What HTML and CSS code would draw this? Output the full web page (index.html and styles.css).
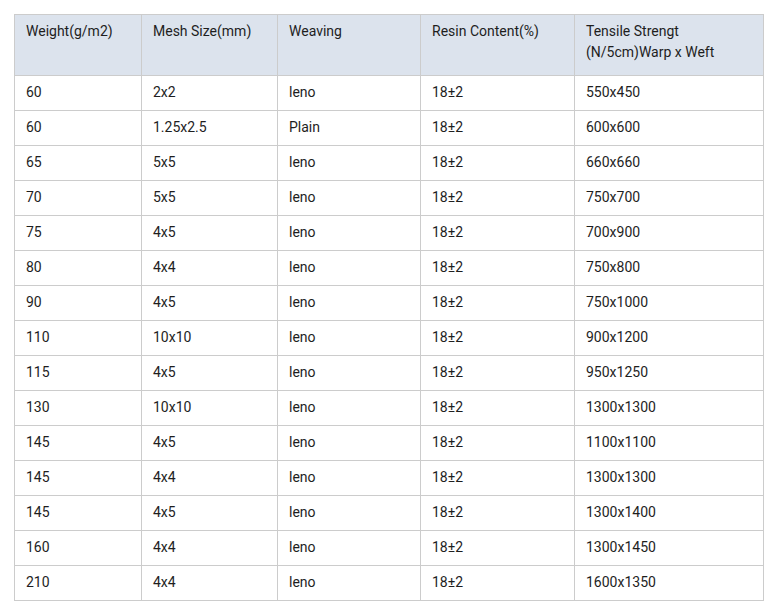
FILE: index.html
```html
<!DOCTYPE html>
<html>
<head>
<meta charset="utf-8">
<link rel="stylesheet" href="styles.css">
</head>
<body>
<table class="spec">
<colgroup>
<col class="c1"><col class="c2"><col class="c3"><col class="c4"><col class="c5">
</colgroup>
<thead>
<tr><th>Weight(g/m2)</th><th>Mesh Size(mm)</th><th>Weaving</th><th>Resin Content(%)</th><th>Tensile Strengt (N/5cm)Warp x Weft</th></tr>
</thead>
<tbody>
<tr><td>60</td><td>2x2</td><td>leno</td><td>18±2</td><td>550x450</td></tr>
<tr><td>60</td><td>1.25x2.5</td><td>Plain</td><td>18±2</td><td>600x600</td></tr>
<tr><td>65</td><td>5x5</td><td>leno</td><td>18±2</td><td>660x660</td></tr>
<tr><td>70</td><td>5x5</td><td>leno</td><td>18±2</td><td>750x700</td></tr>
<tr><td>75</td><td>4x5</td><td>leno</td><td>18±2</td><td>700x900</td></tr>
<tr><td>80</td><td>4x4</td><td>leno</td><td>18±2</td><td>750x800</td></tr>
<tr><td>90</td><td>4x5</td><td>leno</td><td>18±2</td><td>750x1000</td></tr>
<tr><td>110</td><td>10x10</td><td>leno</td><td>18±2</td><td>900x1200</td></tr>
<tr><td>115</td><td>4x5</td><td>leno</td><td>18±2</td><td>950x1250</td></tr>
<tr><td>130</td><td>10x10</td><td>leno</td><td>18±2</td><td>1300x1300</td></tr>
<tr><td>145</td><td>4x5</td><td>leno</td><td>18±2</td><td>1100x1100</td></tr>
<tr><td>145</td><td>4x4</td><td>leno</td><td>18±2</td><td>1300x1300</td></tr>
<tr><td>145</td><td>4x5</td><td>leno</td><td>18±2</td><td>1300x1400</td></tr>
<tr><td>160</td><td>4x4</td><td>leno</td><td>18±2</td><td>1300x1450</td></tr>
<tr><td>210</td><td>4x4</td><td>leno</td><td>18±2</td><td>1600x1350</td></tr>
</tbody>
</table>
</body>
</html>
```
FILE: styles.css
```css
html, body {
  margin: 0;
  background: #ffffff;
}
body {
  padding: 14px;
  font-family: Roboto, "Liberation Sans", sans-serif;
  font-size: 14px;
  color: #1e1e1e;
}
.spec {
  border-collapse: collapse;
  table-layout: fixed;
  width: 749px;
}
.c1 { width: 127px; }
.c2 { width: 136px; }
.c3 { width: 143px; }
.c4 { width: 154px; }
.c5 { width: 189px; }
.spec th, .spec td {
  border: 1px solid #cccccc;
  text-align: left;
  vertical-align: top;
  padding: 0 11px;
  font-weight: 400;
}
.spec th {
  background: #dce3ed;
  height: 61px;
  padding-top: 6px;
  line-height: 21px;
  box-sizing: border-box;
}
.spec td {
  height: 35px;
  line-height: 32px;
  box-sizing: border-box;
}
```
